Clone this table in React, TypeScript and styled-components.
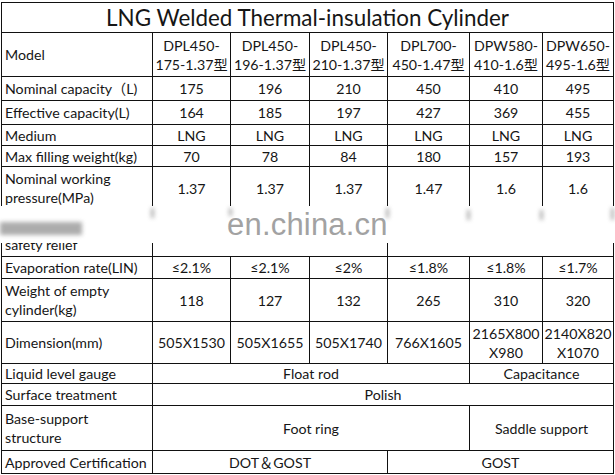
import React from 'react';
import styled, { createGlobalStyle } from 'styled-components';

const GlobalStyle = createGlobalStyle`
  html, body {
    margin: 0;
    padding: 0;
    background: #fff;
  }
  body {
    font-family: Lato, "Noto Sans CJK SC", sans-serif;
    color: #161616;
  }
`;

const Page = styled.div`
  position: relative;
  width: 615px;
  height: 475px;
  padding: 2px 0 0 1px;
  box-sizing: border-box;
  overflow: hidden;
`;

const Table = styled.table`
  border-collapse: collapse;
  table-layout: fixed;
  width: 612px;
  font-size: 14.2px;
`;

const Col = styled.col<{ $w: number }>`
  width: ${(p) => p.$w}px;
`;

const Row = styled.tr<{ $h: number }>`
  height: ${(p) => p.$h}px;
`;

const Title = styled.td`
  border: 1px solid #111;
  padding: 0;
  text-align: center;
  font-size: 22.4px;
  line-height: 26px;
`;

const Label = styled.td<{ $bottom?: boolean }>`
  border: 1px solid #111;
  padding: ${(p) => (p.$bottom ? '0 0 2px 3px' : '0 0 0 3px')};
  text-align: left;
  vertical-align: ${(p) => (p.$bottom ? 'bottom' : 'middle')};
  line-height: 19px;
  white-space: nowrap;
  overflow: hidden;
`;

const Cell = styled.td`
  border: 1px solid #111;
  padding: 0;
  text-align: center;
  vertical-align: middle;
  line-height: 19px;
  white-space: nowrap;
  overflow: hidden;
`;

const Watermark = styled.div`
  position: absolute;
  left: 0;
  top: 206px;
  width: 615px;
  height: 37px;
  background: #fff;
`;

const Smudge = styled.div<{ $x: number; $y: number; $w: number; $h: number }>`
  position: absolute;
  left: ${(p) => p.$x}px;
  top: ${(p) => p.$y}px;
  width: ${(p) => p.$w}px;
  height: ${(p) => p.$h}px;
  background: #8a8a8a;
  filter: blur(2px);
  opacity: 0.7;
`;

const Brand = styled.div`
  position: absolute;
  left: 227px;
  top: 0;
  font-family: "Liberation Sans", Arial, sans-serif;
  font-size: 31px;
  line-height: 38px;
  color: #a2a2a2;
  letter-spacing: 0.2px;
`;

const models = [
  ['DPL450-', '175-1.37型'],
  ['DPL450-', '196-1.37型'],
  ['DPL450-', '210-1.37型'],
  ['DPL700-', '450-1.47型'],
  ['DPW580-', '410-1.6型'],
  ['DPW650-', '495-1.6型'],
];

const simpleRows: { label: string; h: number; values: string[] }[] = [
  { label: 'Nominal capacity（L)', h: 24, values: ['175', '196', '210', '450', '410', '495'] },
  { label: 'Effective capacity(L)', h: 24, values: ['164', '185', '197', '427', '369', '455'] },
  { label: 'Medium', h: 21, values: ['LNG', 'LNG', 'LNG', 'LNG', 'LNG', 'LNG'] },
  { label: 'Max filling weight(kg)', h: 21, values: ['70', '78', '84', '180', '157', '193'] },
];

const colWidths = [151, 78, 79, 78, 82, 73, 71];

const App = () => {
  return (
    <Page>
      <GlobalStyle />
      <Table>
        <colgroup>
          {colWidths.map((w, i) => (
            <Col key={i} $w={w} />
          ))}
        </colgroup>
        <tbody>
          <Row $h={30}>
            <Title colSpan={7}>LNG Welded Thermal-insulation Cylinder</Title>
          </Row>
          <Row $h={44}>
            <Label>Model</Label>
            {models.map((m) => (
              <Cell key={m[1]}>
                {m[0]}
                <br />
                {m[1]}
              </Cell>
            ))}
          </Row>
          {simpleRows.map((r) => (
            <Row key={r.label} $h={r.h}>
              <Label>{r.label}</Label>
              {r.values.map((v, i) => (
                <Cell key={i}>{v}</Cell>
              ))}
            </Row>
          ))}
          <Row $h={43}>
            <Label>
              Nominal working
              <br />
              pressure(MPa)
            </Label>
            {['1.37', '1.37', '1.37', '1.47', '1.6', '1.6'].map((v, i) => (
              <Cell key={i}>{v}</Cell>
            ))}
          </Row>
          <Row $h={47}>
            <Label $bottom>safety relief</Label>
            <Cell colSpan={3} />
            <Cell colSpan={3} />
          </Row>
          <Row $h={22}>
            <Label>Evaporation rate(LIN)</Label>
            {['≤2.1%', '≤2.1%', '≤2%', '≤1.8%', '≤1.8%', '≤1.7%'].map((v, i) => (
              <Cell key={i}>{v}</Cell>
            ))}
          </Row>
          <Row $h={43}>
            <Label>
              Weight of empty
              <br />
              cylinder(kg)
            </Label>
            {['118', '127', '132', '265', '310', '320'].map((v, i) => (
              <Cell key={i}>{v}</Cell>
            ))}
          </Row>
          <Row $h={42}>
            <Label>Dimension(mm)</Label>
            <Cell>505X1530</Cell>
            <Cell>505X1655</Cell>
            <Cell>505X1740</Cell>
            <Cell>766X1605</Cell>
            <Cell>
              2165X800
              <br />
              X980
            </Cell>
            <Cell>
              2140X820
              <br />
              X1070
            </Cell>
          </Row>
          <Row $h={20}>
            <Label>Liquid level gauge</Label>
            <Cell colSpan={4}>Float rod</Cell>
            <Cell colSpan={2}>Capacitance</Cell>
          </Row>
          <Row $h={22}>
            <Label>Surface treatment</Label>
            <Cell colSpan={6}>Polish</Cell>
          </Row>
          <Row $h={45}>
            <Label>
              Base-support
              <br />
              structure
            </Label>
            <Cell colSpan={4}>Foot ring</Cell>
            <Cell colSpan={2}>Saddle support</Cell>
          </Row>
          <Row $h={23}>
            <Label>Approved Certification</Label>
            <Cell colSpan={3}>DOT＆GOST</Cell>
            <Cell colSpan={3}>GOST</Cell>
          </Row>
        </tbody>
      </Table>
      <Watermark>
        <Smudge $x={0} $y={16} $w={82} $h={13} />
        <Smudge $x={151} $y={2} $w={3} $h={10} />
        <Smudge $x={229} $y={2} $w={3} $h={8} />
        <Smudge $x={386} $y={2} $w={3} $h={10} />
        <Smudge $x={467} $y={4} $w={3} $h={10} />
        <Smudge $x={540} $y={4} $w={3} $h={10} />
        <Smudge $x={611} $y={2} $w={3} $h={12} />
        <Brand>en.china.cn</Brand>
      </Watermark>
    </Page>
  );
};

export default App;
